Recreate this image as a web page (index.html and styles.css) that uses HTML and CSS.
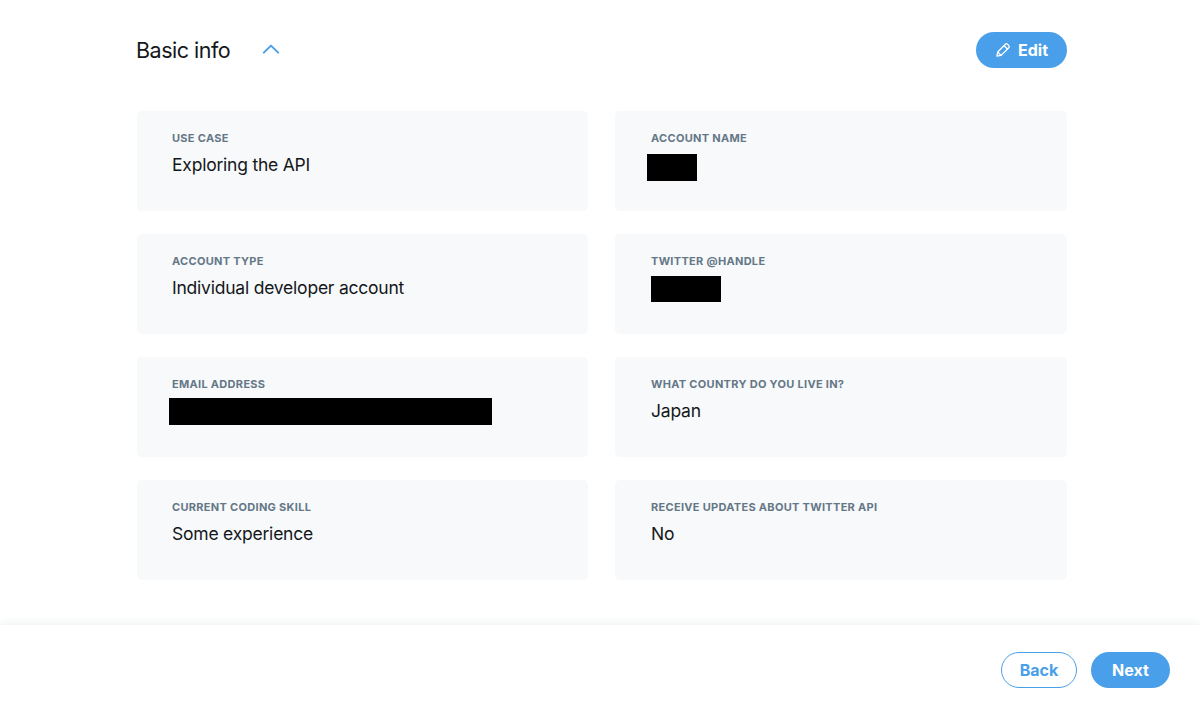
FILE: index.html
```
<!DOCTYPE html>
<html lang="en">
<head>
  <meta charset="UTF-8" />
  <meta name="viewport" content="width=device-width, initial-scale=1.0"/>
  <title>Basic info</title>
  <link rel="stylesheet" href="styles.css">
</head>
<body>

  <main class="container">
    <div class="section-header">
      <h2>Basic info</h2>
      <svg class="chevron" viewBox="0 0 18 12" fill="none">
        <path d="M1.8 9.6 L9 2.6 L16.2 9.6" stroke="#4a9fea" stroke-width="2" stroke-linecap="round" stroke-linejoin="round"/>
      </svg>
      <button type="button" class="btn btn-primary btn-edit">
        <svg class="pencil" viewBox="0 0 16 16" fill="none" stroke="#fff" stroke-width="1.3" stroke-linejoin="round" stroke-linecap="round">
          <path d="M1.9 14.2 L2.7 10 L10.4 2.3 Q11.4 1.3 12.5 2.3 L13.8 3.6 Q14.8 4.6 13.8 5.7 L6.1 13.4 Z"/>
          <path d="M9.1 3.7 L12.4 7 M2.8 10.2 L6 13.3"/>
        </svg>
        <span>Edit</span>
      </button>
    </div>

    <div class="cards">
      <div class="card">
        <div class="label">USE CASE</div>
        <div class="value">Exploring the API</div>
      </div>
      <div class="card">
        <div class="label">ACCOUNT NAME</div>
        <div class="redacted redacted-name"></div>
      </div>
      <div class="card">
        <div class="label">ACCOUNT TYPE</div>
        <div class="value">Individual developer account</div>
      </div>
      <div class="card">
        <div class="label">TWITTER @HANDLE</div>
        <div class="redacted redacted-handle"></div>
      </div>
      <div class="card">
        <div class="label">EMAIL ADDRESS</div>
        <div class="redacted redacted-email"></div>
      </div>
      <div class="card">
        <div class="label">WHAT COUNTRY DO YOU LIVE IN?</div>
        <div class="value">Japan</div>
      </div>
      <div class="card">
        <div class="label">CURRENT CODING SKILL</div>
        <div class="value">Some experience</div>
      </div>
      <div class="card">
        <div class="label">RECEIVE UPDATES ABOUT TWITTER API</div>
        <div class="value">No</div>
      </div>
    </div>
  </main>

  <footer class="footer">
    <button type="button" class="btn btn-outline">Back</button>
    <button type="button" class="btn btn-primary btn-next">Next</button>
  </footer>

</body>
</html>
```
FILE: styles.css
```
* {
  box-sizing: border-box;
}
body {
  font-family: Inter, "Liberation Sans", sans-serif;
  margin: 0;
  height: 711px;
  display: flex;
  flex-direction: column;
  background: #fff;
  color: #14171a;
  overflow: hidden;
}
.container {
  width: 930px;
  margin-left: 137px;
  padding-top: 32px;
  flex: 1;
}
.section-header {
  display: flex;
  align-items: center;
  height: 36px;
  margin-bottom: 43px;
}
h2 {
  margin: 0 0 0 -1px;
  width: 95px;
  white-space: nowrap;
  font-size: 21.5px;
  font-weight: 400;
  letter-spacing: -0.5px;
}
.chevron {
  width: 18px;
  height: 12px;
  margin: 0 0 2px 31px;
}
.btn {
  height: 36px;
  border: none;
  border-radius: 18px;
  font-family: inherit;
  font-size: 16px;
  font-weight: 700;
  padding: 0;
}
.btn-primary {
  background: #4a9fea;
  color: #fff;
}
.btn-outline {
  background: #fff;
  color: #4a9fea;
  border: 1px solid #4a9fea;
  width: 76px;
}
.btn-edit {
  width: 91px;
  margin-left: auto;
  display: flex;
  align-items: center;
  justify-content: center;
  gap: 7px;
}
.pencil {
  width: 16px;
  height: 16px;
}
.btn-next {
  width: 79px;
}
.cards {
  display: grid;
  grid-template-columns: 451px 452px;
  column-gap: 27px;
  row-gap: 23px;
}
.card {
  height: 100px;
  padding: 19px 35px;
  background: #f7f9fb;
  border-radius: 5px;
}
.card:nth-child(even) {
  padding-left: 36px;
}
.label {
  font-size: 11px;
  line-height: 16px;
  font-weight: 650;
  letter-spacing: 0.3px;
  color: #657786;
}
.value {
  margin-top: 7px;
  font-size: 17.5px;
  line-height: 24px;
  letter-spacing: -0.22px;
}
/* hidden personal details */
.redacted {
  background: #000;
}
.redacted-name {
  width: 50px;
  height: 27px;
  margin: 8px 0 0 -4px;
}
.redacted-handle {
  width: 70px;
  height: 26px;
  margin-top: 7px;
}
.redacted-email {
  width: 323px;
  height: 27px;
  margin: 6px 0 0 -3px;
}
.footer {
  height: 86px;
  display: flex;
  justify-content: flex-end;
  align-items: center;
  gap: 14px;
  padding: 3px 30px 0 0;
  background: #fff;
  box-shadow: 0 0 10px rgba(101, 119, 134, 0.15);
}
```
